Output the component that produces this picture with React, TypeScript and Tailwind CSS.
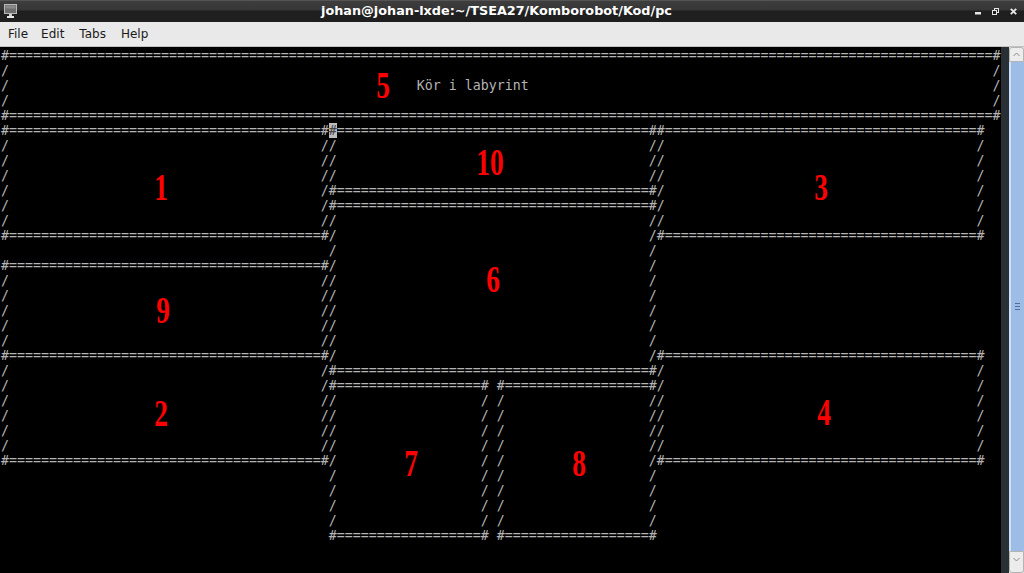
const W = 125;
const H = 33;

function buildGrid(): string[] {
  const g: string[][] = Array.from({ length: H }, () => Array(W).fill(" "));
  const box = (r1: number, r2: number, c1: number, c2: number) => {
    for (let c = c1; c <= c2; c++) {
      g[r1][c] = "=";
      g[r2][c] = "=";
    }
    g[r1][c1] = g[r1][c2] = g[r2][c1] = g[r2][c2] = "#";
    for (let r = r1 + 1; r < r2; r++) {
      g[r][c1] = "/";
      g[r][c2] = "/";
    }
  };
  const put = (r: number, c: number, s: string) => {
    for (let i = 0; i < s.length; i++) g[r][c + i] = s[i];
  };

  box(0, 4, 0, 124); // 5
  box(5, 12, 0, 40); // 1
  box(5, 9, 41, 81); // 10
  box(5, 12, 82, 122); // 3
  box(10, 21, 41, 81); // 6
  box(14, 20, 0, 40); // 9
  box(20, 27, 0, 40); // 2
  box(20, 27, 82, 122); // 4
  box(22, 32, 41, 60); // 7
  box(22, 32, 62, 81); // 8
  put(2, 52, "Kör i labyrint");

  return g.map((row) => row.join(""));
}

const labels = [
  { n: "5", x: 383, y: 85 },
  { n: "10", x: 490, y: 162 },
  { n: "1", x: 161, y: 187 },
  { n: "3", x: 821, y: 187 },
  { n: "6", x: 493, y: 279 },
  { n: "9", x: 163, y: 310 },
  { n: "2", x: 161, y: 413 },
  { n: "4", x: 824, y: 412 },
  { n: "7", x: 411, y: 463 },
  { n: "8", x: 579, y: 463 },
];

function MonitorIcon() {
  return (
    <svg width="14" height="14" viewBox="0 0 14 14">
      <rect x="0.5" y="0.5" width="12" height="9" fill="#6e6e6e" stroke="#b8b8b8" />
      <rect x="1.5" y="1.5" width="10" height="3" fill="#8a8a8a" />
      <rect x="5" y="10" width="3" height="2" fill="#cfcfcf" />
      <rect x="3" y="12" width="7" height="2" fill="#e8e8e8" />
    </svg>
  );
}

function WindowButtons() {
  return (
    <div className="flex items-start gap-[11px] pr-[7px] pt-[8px]">
      <svg width="6" height="7" viewBox="0 0 6 7">
        <rect x="0" y="4" width="6" height="2.5" fill="#e6e6e6" />
      </svg>
      <svg width="7" height="7" viewBox="0 0 7 7">
        <rect x="2.5" y="0.5" width="4" height="4" fill="none" stroke="#e6e6e6" />
        <rect x="0.5" y="2.5" width="4" height="4" fill="#1f1f1f" stroke="#e6e6e6" />
      </svg>
      <svg width="7" height="7" viewBox="0 0 7 7">
        <path d="M0.8 0.8 L6.2 6.2 M6.2 0.8 L0.8 6.2" stroke="#e6e6e6" strokeWidth="1.9" />
      </svg>
    </div>
  );
}

function Scrollbar() {
  return (
    <div className="flex w-[15px] flex-col bg-[#dcdcdc]">
      <div className="flex h-[15px] items-center justify-center rounded-t-[3px] border border-[#b4b4b4] bg-[#ececec]">
        <svg width="7" height="5" viewBox="0 0 7 5">
          <path d="M0.5 4 L3.5 1 L6.5 4" fill="none" stroke="#8a8a8a" strokeWidth="1" />
        </svg>
      </div>
      <div className="flex flex-1 items-center justify-center border-l-2 border-[#cfe0f6] bg-[#9dbce6]">
        <div className="flex flex-col gap-[2px]">
          <div className="h-px w-[5px] bg-[#4d6f9e]" />
          <div className="h-px w-[5px] bg-[#4d6f9e]" />
          <div className="h-px w-[5px] bg-[#4d6f9e]" />
        </div>
      </div>
      <div className="flex h-[22px] items-start justify-center rounded-b-[3px] border border-[#b4b4b4] bg-[#ececec] pt-[5px]">
        <svg width="7" height="5" viewBox="0 0 7 5">
          <path d="M0.5 1 L3.5 4 L6.5 1" fill="none" stroke="#8a8a8a" strokeWidth="1" />
        </svg>
      </div>
    </div>
  );
}

export default function App() {
  const rows = buildGrid();
  const cur = rows[5];

  return (
    <div className="relative flex h-[573px] w-[1024px] flex-col overflow-hidden bg-black">
      {/* title bar */}
      <div className="flex h-[22px] shrink-0 bg-[linear-gradient(180deg,#6a6a6a_0px,#3e3e3e_1px,#363636_10px,#1f1f1f_11px,#1f1f1f_100%)]">
        <div className="pl-[4px] pt-[4px]">
          <MonitorIcon />
        </div>
        <div className="flex-1 pt-[3px] text-center font-['DejaVu_Sans',sans-serif] text-[12.8px] font-bold leading-[16px] text-white">
          johan@johan-lxde:~/TSEA27/Komborobot/Kod/pc
        </div>
        <WindowButtons />
      </div>

      {/* menu bar */}
      <div className="flex h-[25px] shrink-0 items-center border-b border-[#c2c2c2] bg-[#e9e9e9] pl-[8px] font-['DejaVu_Sans',sans-serif] text-[12px] text-[#1a1a1a]">
        <span>File</span>
        <span className="ml-[13px]">Edit</span>
        <span className="ml-[15px]">Tabs</span>
        <span className="ml-[15px]">Help</span>
      </div>

      {/* terminal */}
      <div className="flex flex-1">
        <div className="w-[1001px] bg-black pl-px pt-px font-['DejaVu_Sans_Mono',monospace] text-[13.29px] leading-[15px] text-[#b4b4b4]">
          {rows.map((r, i) =>
            i === 5 ? (
              <div key={i} className="h-[15px] whitespace-pre">
                {cur.slice(0, 41)}
                <span className="bg-[#bdbdbd] text-[#444]">{cur[41]}</span>
                {cur.slice(42)}
              </div>
            ) : (
              <div key={i} className="h-[15px] whitespace-pre">
                {r}
              </div>
            )
          )}
        </div>
        <div className="w-[8px] bg-[#283036]" />
        <Scrollbar />
      </div>

      {/* red numbers drawn over the screenshot */}
      {labels.map((l) => (
        <div
          key={l.n}
          className="absolute -translate-x-1/2 scale-x-[0.72] font-['Liberation_Serif',serif] text-[38px] font-bold leading-none text-[#ff0000]"
          style={{ left: l.x, top: l.y - 19 }}
        >
          {l.n}
        </div>
      ))}
    </div>
  );
}
